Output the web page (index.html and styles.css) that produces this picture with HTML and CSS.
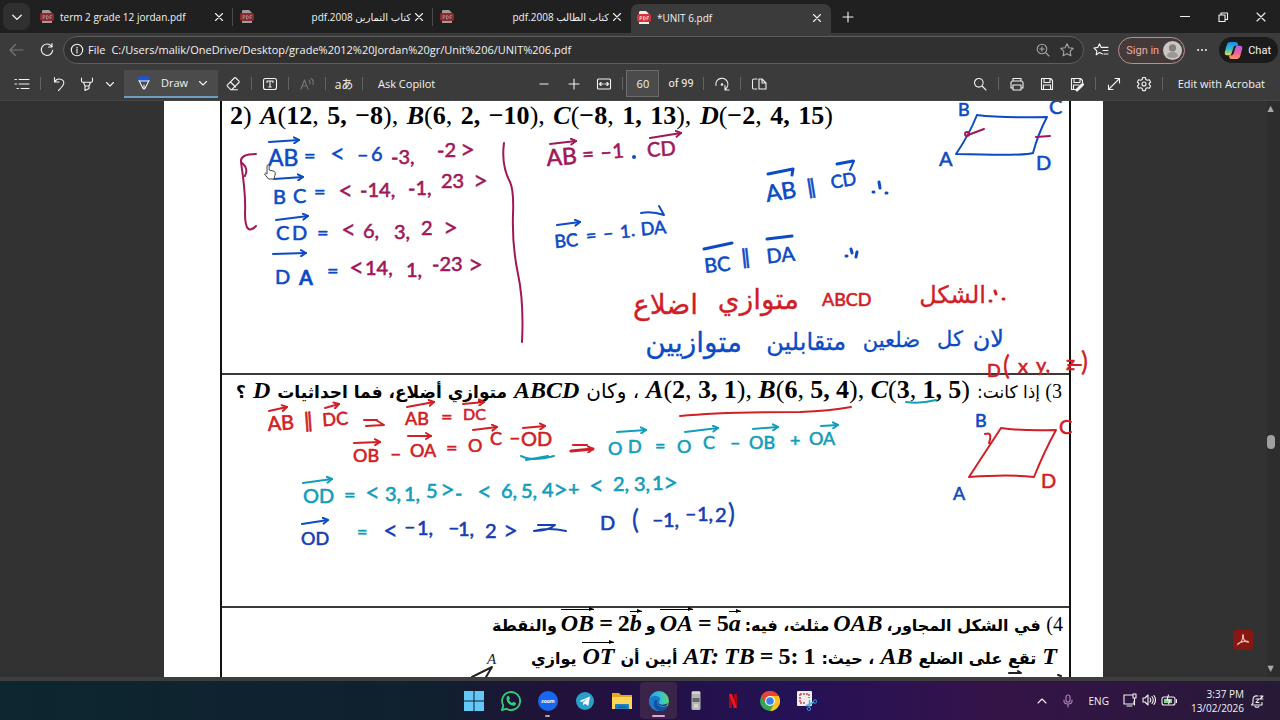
FILE: index.html
```html
<!DOCTYPE html>
<html lang="en">
<head>
<meta charset="utf-8">
<title>UNIT 6.pdf</title>
<link rel="stylesheet" href="styles.css">
</head>
<body>
<svg class="defs" aria-hidden="true">
  <symbol id="pdf" viewBox="0 0 14 14"><path d="M3 0h6l3 3v10H2V1z" fill="#f3eeee"/><rect x="0" y="3" width="14" height="8" rx="2" fill="#d5323b"/><path d="M3 9V5.500h1q1 0 1 1t-1 1H3M6.500 5.500V9q2 0 2-1.700t-2-1.800M10 9V5.500h2M10 7.200h1.600" fill="none" stroke="#fbdada" stroke-width=".8"/></symbol>
  <symbol id="x" viewBox="0 0 10 10"><path d="M1.500 1.500l7 7M8.500 1.500l-7 7"/></symbol>
  <symbol id="down" viewBox="0 0 10 10"><path d="M1.500 3.500L5 7l3.500-3.500"/></symbol>
  <symbol id="plus" viewBox="0 0 12 12"><path d="M6 1v10M1 6h10"/></symbol>
  <symbol id="star" viewBox="0 0 16 16"><path d="M8 1.800l1.900 4 4.300.6-3.100 3 .8 4.400L8 11.700l-3.900 2.100.8-4.400-3.100-3 4.300-.6z"/></symbol>
</svg>

<header class="tabs">
  <button class="tab-menu" aria-label="Tab actions"><svg class="i s12"><use href="#down"/></svg></button>
  <div class="tab"><svg class="fav"><use href="#pdf"/></svg><span class="title">term 2 grade 12 jordan.pdf</span><button aria-label="Close tab"><svg class="i s10"><use href="#x"/></svg></button></div>
  <div class="tab"><svg class="fav"><use href="#pdf"/></svg><span class="title" dir="rtl">كتاب التمارين 2008.pdf</span><button aria-label="Close tab"><svg class="i s10"><use href="#x"/></svg></button></div>
  <div class="tab last"><svg class="fav"><use href="#pdf"/></svg><span class="title" dir="rtl">كتاب الطالب 2008.pdf</span><button aria-label="Close tab"><svg class="i s10"><use href="#x"/></svg></button></div>
  <div class="tab active"><svg class="fav"><use href="#pdf"/></svg><span class="title">*UNIT 6.pdf</span><button aria-label="Close tab"><svg class="i s10"><use href="#x"/></svg></button></div>
  <button class="new-tab" aria-label="New tab"><svg class="i s12"><use href="#plus"/></svg></button>
  <div class="window-controls">
    <button aria-label="Minimize"><svg class="i s12" viewBox="0 0 12 12"><path d="M1.500 5.500h9"/></svg></button>
    <button aria-label="Restore"><svg class="i s12" viewBox="0 0 12 12"><path d="M2 4h6v6.500H2zM4 4V2h6.500v6.500H8"/></svg></button>
    <button aria-label="Close"><svg class="i s12" viewBox="0 0 12 12"><path d="M2 2l8 8M10 2l-8 8"/></svg></button>
  </div>
</header>

<nav class="address">
  <button class="nav-btn dim" aria-label="Back"><svg class="i s16" viewBox="0 0 16 16"><path d="M15 8H2M7.500 2.500L2 8l5.500 5.500"/></svg></button>
  <button class="nav-btn" aria-label="Refresh"><svg class="i s16" viewBox="0 0 16 16"><path d="M12.500 4.200A5.700 5.700 0 1 0 13.700 8M13 1.500v3.500H9.500"/></svg></button>
  <div class="pill">
    <svg class="i s14" viewBox="0 0 14 14"><circle cx="7" cy="7" r="5.700"/><path d="M7 6.300v3.700M7 4v.9"/></svg>
    <span class="scheme">File</span>
    <input aria-label="Address" value="C:/Users/malik/OneDrive/Desktop/grade%2012%20Jordan%20gr/Unit%206/UNIT%206.pdf">
    <button class="muted" aria-label="Zoom"><svg class="i s14" viewBox="0 0 14 14"><circle cx="6" cy="6" r="4.800"/><path d="M9.500 9.500L13 13M6 3.800v4.400M3.800 6h4.400"/></svg></button>
    <button class="muted" aria-label="Add to favorites"><svg class="i s16"><use href="#star"/></svg></button>
  </div>
  <button class="nav-btn fav-list" aria-label="Favorites"><svg class="i s16" viewBox="0 0 16 16"><path d="M9.500 12L6.500 10.500 3.200 12.800l.6-4L1 6l3.800-.6L6.500 1.800l1.700 3.600H15M10 8.500h5M11 12h4"/></svg></button>
  <button class="signin">Sign in<svg viewBox="0 0 20 20"><circle cx="10" cy="10" r="10" fill="#c9c7c6"/><circle cx="10" cy="7.300" r="3.800" fill="#85807e"/><path d="M4 16c0-6 12-6 12 0q-6 4-12 0" fill="#9d9997"/></svg></button>
  <button class="nav-btn more" aria-label="Settings and more"><svg viewBox="0 0 14 4"><g fill="#eee"><circle cx="2.500" cy="2" r="1.200"/><circle cx="7" cy="2" r="1.200"/><circle cx="11.500" cy="2" r="1.200"/></g></svg></button>
  <button class="chat"><svg viewBox="0 0 20 20"><defs><linearGradient id="c1" x2="0" y2="1"><stop offset="0" stop-color="#1889ec"/><stop offset=".55" stop-color="#35bfc7"/><stop offset="1" stop-color="#e8dc48"/></linearGradient><linearGradient id="c2" x2="0" y2="1"><stop offset="0" stop-color="#a963ed"/><stop offset=".5" stop-color="#ef5c9e"/><stop offset="1" stop-color="#ff9858"/></linearGradient></defs><path d="M6 1h6q2 0 2.500 2l.5 2h-3q-1.500 0-2 1.500L8 13q-.5 2-2 2H3q-3 0-2-4L3 4Q3.800 1 6 1z" fill="url(#c1)"/><path d="M14 19H8q-2 0-2.500-2L5 15h3q1.500 0 2-1.500L12 7q.5-2 2-2h3q3 0 2 4l-2 7q-.8 3-3 3z" fill="url(#c2)"/></svg>Chat</button>
</nav>

<div class="toolbar">
  <div class="group">
    <button class="tool" aria-label="Contents"><svg class="i s16" viewBox="0 0 16 16"><path d="M5 3.500h10M5 8h10M7 12.500h8M1 3.500h1.500M1 8h1.500M3 12.500h1.500"/></svg></button><i class="sep"></i>
    <button class="tool" aria-label="Undo"><svg class="i s16" viewBox="0 0 16 16"><path d="M3.500 1.500V6H8M3.500 6c3-5 10-3 9.200 1.500C12.500 9.500 10 12 7.500 14.500"/></svg></button>
    <button class="tool hl" aria-label="Highlight"><svg class="i s16" viewBox="0 0 16 16"><path d="M2.500 2v3q0 1.200 1.200 1.200h8.600q1.200 0 1.200-1.200V2M4.500 6.200L6 10h4l1.500-3.800M6 10v4.500l4-2V10"/></svg></button>
    <button class="chev" aria-label="Highlight options"><svg class="i s10"><use href="#down"/></svg></button>
    <button class="draw"><svg class="i s16" viewBox="0 0 16 16"><path d="M2 2h12l-1.500 4h-9z" fill="#1d55d8" stroke="#1d55d8"/><path d="M3 5.500L7 13.500q1 1.200 2 0l4-8M3.500 6h9M8 10v3"/></svg>Draw<svg class="i s10 end"><use href="#down"/></svg></button>
    <button class="tool" aria-label="Erase"><svg class="i s16" viewBox="0 0 16 16"><path d="M9.300 2L2.500 8.800q-.8.800 0 1.500l3 3q.7.700 1.500 0L14 6.500q.6-.7 0-1.400L10.800 2q-.8-.7-1.500 0zM5.500 6l5 5M7 13.800h5.500"/></svg></button><i class="sep"></i>
    <button class="tool" aria-label="Add text"><svg class="i s16" viewBox="0 0 16 16"><rect x="1.500" y="2.500" width="13" height="11" rx="2"/><path d="M5 6.500V5h6v1.500M8 5v6M6.800 11h2.400"/></svg></button><i class="sep"></i>
    <button class="tool faint" aria-label="Read aloud"><svg class="i s16" viewBox="0 0 16 16"><path d="M2 13L5.500 4 9 13M3.200 10h4.600M10 4q1.500 1.500 1 4M12.500 2.500q2.500 2.500 1.500 6"/></svg></button><i class="sep"></i>
    <button class="tool ja" aria-label="Translate">aあ</button><i class="sep"></i>
    <button class="text-btn ask">Ask Copilot</button>
  </div>
  <div class="group middle">
    <button class="tool" aria-label="Zoom out"><svg class="i s12" viewBox="0 0 12 12"><path d="M2 6h8"/></svg></button>
    <button class="tool" aria-label="Zoom in"><svg class="i s12"><use href="#plus"/></svg></button>
    <button class="tool" aria-label="Fit to width"><svg class="i s16" viewBox="0 0 16 16"><rect x="1.500" y="3" width="13" height="10" rx="1"/><path d="M3.800 8h3.400M8.800 8h3.400M5 6.500L3.500 8 5 9.500M11 6.500L12.500 8 11 9.500"/></svg></button><i class="sep"></i>
    <input aria-label="Page number" value="60"><span class="of">of 99</span><i class="sep"></i>
    <button class="tool" aria-label="Rotate"><svg class="i s16" viewBox="0 0 16 16"><path d="M2 9.500a6 6 0 1 1 9.500 3.500M11 9.500v4.500h4"/><circle cx="8" cy="8.500" r=".8"/></svg></button><i class="sep"></i>
    <button class="tool" aria-label="Page view"><svg class="i s16" viewBox="0 0 16 16"><path d="M8 3h3l4 4v6H8zM11 3v4h4"/><path d="M6 3H3q-1.500 0-1.500 1.500v7Q1.500 13 3 13h3" stroke-dasharray="2 1"/></svg></button>
  </div>
  <div class="group right">
    <button class="tool" aria-label="Find"><svg class="i s16" viewBox="0 0 16 16"><circle cx="6.800" cy="6.800" r="4.300"/><path d="M10 10l4 4"/></svg></button><i class="sep"></i>
    <button class="tool" aria-label="Print"><svg class="i s16" viewBox="0 0 16 16"><path d="M4 5V2.500h8V5M4 12H2V7q0-2 2-2h8q2 0 2 2v5h-2M4 9h8v5H4z"/></svg></button>
    <button class="tool" aria-label="Save"><svg class="i s16" viewBox="0 0 16 16"><path d="M2.500 2.500h9l2 2v9h-11zM5 2.500v4h6v-4M4.500 13.500V9h7v4.500"/></svg></button>
    <button class="tool" aria-label="Save as"><svg class="i s16" viewBox="0 0 16 16"><path d="M7 13.500H2.500v-11h9l2 2V7M5 2.500v4h6v-4M4.500 13.500V9H10"/><path d="M8 14l5.500-5.500" stroke-width="3"/></svg></button><i class="sep"></i>
    <button class="tool" aria-label="Full screen"><svg class="i s16" viewBox="0 0 16 16"><path d="M2.500 13.500l11-11M9 2.500h4.500V7M2.500 9v4.500H7"/></svg></button>
    <button class="tool" aria-label="Settings"><svg class="i s16" viewBox="0 0 16 16"><path d="M6.700 1.500h2.600l.5 2 1.500.8 2-.6 1.300 2.300L13.200 7.500v1.200l1.400 1.400-1.300 2.200-2-.5-1.500.8-.5 2H6.700l-.5-2-1.500-.8-2 .5-1.300-2.200 1.400-1.400V7.500L1.400 6l1.300-2.300 2 .6 1.500-.8z"/><circle cx="8" cy="8" r="2"/></svg></button><i class="sep"></i>
    <button class="text-btn edit">Edit with Acrobat</button>
  </div>
</div>

<main class="viewer">
  <div class="canvas">
    <article class="page">
      <div class="frame">
        <section class="q1">
          <p class="line first"><span><b>2</b>)</span><span><em>A</em>(<b>12</b>,</span><b>5,</b><span><b>−8</b>),</span><span><em>B</em>(<b>6</b>,</span><b>2,</b><span><b>−10</b>),</span><span><em>C</em>(<b>−8</b>,</span><b>1,</b><span><b>13</b>),</span><span><em>D</em>(<b>−2</b>,</span><b>4,</b><span><b>15</b>)</span></p>
        </section>
        <section class="q2" dir="rtl">
          <p class="line"><span class="ar thin"><span class="num">3)</span> إذا كانت:</span><span class="eq wide" dir="ltr"><span><em>A</em>(<b>2</b>,</span><b>3,</b><span><b>1</b>),</span><span><em>B</em>(<b>6</b>,</span><b>5,</b><span><b>4</b>),</span><span><em>C</em>(<b>3</b>,</span><b>1,</b><span><b>5</b>)</span></span><span class="ar thin big">، وكان</span><em>ABCD</em><span class="ar mid">متوازي أضلاع، فما احداثيات</span><em>D</em><span class="ar mid">؟</span></p>
        </section>
        <section class="q3" dir="rtl">
          <p class="line a"><span class="ar"><span class="num">4)</span> في الشكل المجاور،</span><em>OAB</em><span class="ar">مثلث، فيه:</span><span class="eq" dir="ltr"><em class="vec">OA</em><b>=</b><span><b>5</b><em class="vec">a</em></span></span><span class="ar">و</span><span class="eq" dir="ltr"><em class="vec">OB</em><b>=</b><span><b>2</b><em class="vec">b</em></span></span><span class="ar">والنقطة</span></p>
          <p class="line b"><em>T</em><span class="ar">تقع على الضلع</span><em>AB</em><span class="ar">، حيث:</span><span class="eq" dir="ltr"><em>AT:</em><em>TB</em><b>=</b><b>5:</b><b>1</b></span><span class="ar">أبين أن</span><em class="vec">OT</em><span class="ar">يوازي</span></p>
        </section>
      </div>
      <svg class="ink" viewBox="164 100 939 577">
        <defs>
          <marker id="h" viewBox="0 0 8 8" refX="6" refY="4" markerWidth="8" markerHeight="8" markerUnits="userSpaceOnUse" orient="auto"><path d="M1 1l5 3-5 3" fill="none" stroke="context-stroke" stroke-width="2"/></marker>
        </defs>
        <g class="blue">
          <g class="arrows"><path d="M269 142L299 140"/><path d="M274 179L303 177"/><path d="M276 220L308 216"/><path d="M273 254L306 253"/><path d="M557 225L580 222"/><path d="M302 524L328 520"/></g>
          <text><tspan class="l" x="268" y="166">AB</tspan><tspan x="304" y="163">=</tspan><tspan class="o" x="330" y="163">&lt;</tspan><tspan x="357" y="161">–</tspan><tspan x="371" y="161">6</tspan></text>
          <text><tspan x="273" y="204">B</tspan><tspan x="293" y="203">C</tspan><tspan x="314" y="199">=</tspan></text>
          <text><tspan x="276" y="240">C</tspan><tspan x="292" y="240">D</tspan><tspan x="317" y="240">=</tspan></text>
          <text><tspan x="275" y="284">D</tspan><tspan class="b" x="299" y="285">A</tspan><tspan x="327" y="278">=</tspan></text>
          <text class="sm" transform="rotate(-5 555 248)"><tspan x="555" y="248">BC</tspan><tspan x="587" y="245">=</tspan><tspan x="604" y="244">–</tspan><tspan x="621" y="244">1</tspan><tspan x="632" y="243">.</tspan><tspan x="642" y="243">DA</tspan></text>
          <path d="M641 213Q652 211 664 215M659 206L664 215"/>
          <path class="thick" d="M768 174L793 169M793 169L792 175M837 164L853 161M704 249L732 243M767 239L792 236"/>
          <path d="M854 161L850 170"/>
          <text transform="rotate(-9 767 202)"><tspan class="l" x="767" y="202">AB</tspan><tspan x="808" y="201">∥</tspan><tspan class="s" x="833" y="199">CD</tspan></text>
          <text transform="rotate(-6 705 273)"><tspan x="705" y="273">BC</tspan><tspan x="742" y="268">∥</tspan><tspan x="768" y="270">DA</tspan></text>
          <path class="thick" d="M873 192h1M879 182l1 6M886 193h1M846 256h1M851 249l1 4M856 257l1-5"/>
          <text class="hand"><tspan class="h24" x="1004" y="347">لان</tspan><tspan x="963" y="346">كل</tspan><tspan x="920" y="347">ضلعين</tspan><tspan class="h24" x="846" y="350">متقابلين</tspan><tspan class="h28" x="742" y="352">متوازيين</tspan></text>
          <path d="M977 115Q1000 118 1047 117Q1038 134 1033 153Q1027 156 956 154Q969 135 977 115"/>
          <text><tspan class="s" x="958" y="116">B</tspan><tspan x="1049" y="114">C</tspan><tspan x="939" y="166">A</tspan><tspan x="1036" y="170">D</tspan></text>
        </g>
        <g class="wine">
          <path d="M256 154Q240 154 241 162Q249 168 245 176M241 162Q246 195 245 213Q245 237 256 226M504 143Q501 165 510 182Q514 190 513 215Q512 245 518 274Q524 302 522 342"/>
          <text><tspan x="391" y="164">-3,</tspan><tspan x="437" y="157">-2</tspan><tspan class="o" x="460" y="159">&gt;</tspan></text>
          <text><tspan class="o" x="338" y="200">&lt;</tspan><tspan x="360" y="197">-14,</tspan><tspan x="408" y="195">-1,</tspan><tspan x="441" y="188">23</tspan><tspan class="o" x="473" y="190">&gt;</tspan></text>
          <text><tspan class="o" x="341" y="239">&lt;</tspan><tspan x="363" y="238">6,</tspan><tspan x="394" y="239">3,</tspan><tspan x="421" y="235">2</tspan><tspan class="o" x="443" y="237">&gt;</tspan></text>
          <text><tspan class="o" x="349" y="277">&lt;</tspan><tspan x="365" y="275">14,</tspan><tspan x="406" y="277">1,</tspan><tspan x="432" y="271">-23</tspan><tspan class="o" x="468" y="274">&gt;</tspan></text>
          <g class="arrows"><path d="M550 144L576 141"/><path d="M650 138L681 133"/></g>
          <text transform="rotate(-4 546 166)"><tspan class="l" x="547" y="166">AB</tspan><tspan x="583" y="164">=</tspan><tspan x="601" y="163">–</tspan><tspan x="613" y="163">1</tspan><tspan x="648" y="164">CD</tspan></text>
          <circle cx="967" cy="134" r="2"/><path d="M968 135L984 129M1036 137L1050 136"/>
        </g>
        <circle cx="634" cy="157" r="1" class="blue"/>
        <g class="red">
          <text class="hand"><tspan class="h24" x="986" y="303">الشكل</tspan><tspan class="h28" x="799" y="309">متوازي</tspan><tspan class="h28" x="698" y="314">اضلاع</tspan></text>
          <path class="thick" d="M990 301h1M995 291l1 3M1003 299h1"/>
          <text class="sm" x="822" y="306">ABCD</text>
          <text><tspan class="s" x="987" y="377">D</tspan><tspan class="o" x="1003" y="375">(</tspan><tspan x="1018" y="373">x</tspan><tspan x="1036" y="372">y,</tspan><tspan x="1066" y="370">z</tspan><tspan class="o" x="1081" y="371">)</tspan></text>
          <path d="M1068 365h13M680 416Q720 412 800 412Q830 411 851 407"/>
          <g class="arrows"><path d="M269 411L287 407"/><path d="M325 408L339 404"/><path d="M407 407L434 402"/><path d="M463 404L484 402"/><path d="M354 443L380 442"/><path d="M408 436L431 436"/><path d="M473 430L497 427"/><path d="M523 428L545 426"/><path class="thick" d="M571 451L593 449"/></g>
          <path d="M364 420h13M366 426L384 425L376 420M573 445h14"/>
          <text transform="rotate(-4 268 431)"><tspan x="268" y="431">AB</tspan><tspan x="304" y="430">∥</tspan><tspan class="s" x="323" y="430">DC</tspan></text>
          <text><tspan class="s" x="405" y="425">AB</tspan><tspan x="441" y="424">=</tspan><tspan class="t" x="463" y="420">DC</tspan></text>
          <text><tspan class="s" x="353" y="462">OB</tspan><tspan x="390" y="460">–</tspan><tspan class="s" x="410" y="457">OA</tspan><tspan x="446" y="455">=</tspan><tspan class="s" x="468" y="452">O</tspan><tspan class="s" x="490" y="445">C</tspan><tspan x="509" y="444">–</tspan><tspan x="521" y="446">OD</tspan></text>
          <path d="M1001 428Q1020 431 1056 430Q1044 452 1034 477Q1010 474 969 477Q984 454 1001 428M985 434q8-3 4 9"/>
          <text><tspan x="1059" y="434">C</tspan><tspan x="1041" y="488">D</tspan></text>
        </g>
        <g class="blue"><text class="sm"><tspan x="975" y="427">B</tspan><tspan x="953" y="500">A</tspan></text></g>
        <g class="teal">
          <path d="M906 402Q920 404 936 400M521 456Q532 462 554 456M526 460L548 456"/>
          <g class="arrows"><path d="M617 432L646 430"/><path d="M685 432L718 428"/><path d="M753 429L778 427"/><path d="M821 426L838 425"/><path d="M303 483L332 479"/></g>
          <text class="sm"><tspan x="608" y="455">O</tspan><tspan x="628" y="453">D</tspan><tspan x="655" y="452">=</tspan><tspan x="677" y="453">O</tspan><tspan x="703" y="449">C</tspan><tspan x="730" y="449">–</tspan><tspan x="749" y="449">OB</tspan><tspan x="790" y="447">+</tspan><tspan x="809" y="445">OA</tspan></text>
          <text><tspan x="303" y="503">OD</tspan><tspan x="344" y="502">=</tspan><tspan class="o" x="365" y="502">&lt;</tspan><tspan x="385" y="501">3,</tspan><tspan x="404" y="501">1,</tspan><tspan x="426" y="498">5</tspan><tspan class="o" x="440" y="499">&gt;</tspan><tspan x="455" y="500">-</tspan><tspan class="o" x="477" y="501">&lt;</tspan><tspan x="501" y="498">6,</tspan><tspan x="521" y="498">5,</tspan><tspan x="542" y="497">4</tspan><tspan class="o" x="553" y="499">&gt;</tspan><tspan x="568" y="496">+</tspan><tspan class="o" x="589" y="495">&lt;</tspan><tspan x="613" y="491">2,</tspan><tspan x="634" y="491">3,</tspan><tspan x="652" y="490">1</tspan><tspan class="o" x="663" y="492">&gt;</tspan></text>
          <text class="sm" x="357" y="538">=</text>
        </g>
        <g class="navy">
          <text><tspan x="301" y="545" class="s">OD</tspan><tspan class="o" x="383" y="540">&lt;</tspan><tspan x="404" y="533">–</tspan><tspan x="417" y="535">1,</tspan><tspan x="448" y="534">–</tspan><tspan x="458" y="536">1,</tspan><tspan x="485" y="538">2</tspan><tspan class="o" x="503" y="540">&gt;</tspan><tspan x="600" y="530">D</tspan><tspan class="o" x="632" y="529">(</tspan><tspan x="652" y="526">–</tspan><tspan x="663" y="527">1,</tspan><tspan x="685" y="520">–</tspan><tspan x="697" y="521">1,</tspan><tspan x="715" y="522">2</tspan><tspan class="o" x="728" y="523">)</tspan></text>
          <path d="M538 525L555 525Q548 531 534 531Q548 527 566 531"/>
        </g>
        <g class="print">
          <text x="487" y="664">A</text>
          <path d="M472 677L492 667L486 677M1009 673h12l-3-2M1058 675l3 1"/>
        </g>
      </svg>
      <svg class="cursor" viewBox="0 0 14 18"><path d="M4 11V2.500Q5.200 1 6.200 2.500V7l5 1.300Q12.500 9 12.300 11L11 16H5.500L1.500 11Q2 9.300 4 11z" fill="#fff" stroke="#444"/></svg>
    </article>
    <button class="acrobat" aria-label="Open in Acrobat"><svg viewBox="0 0 20 20"><path d="M4 15c5-2 6-7 5.500-10 0-1.500 1.500-1 1 1C9.500 9 14 13 16 12.500c1-.7-1.500-1.800-5-1S4.500 13.500 4 15z" fill="none" stroke="#e9b5b0" stroke-width="1.200"/></svg></button>
  </div>
  <div class="scrollbar"><span>▲</span><i></i><span>▼</span></div>
</main>

<footer class="taskbar">
  <div class="apps">
    <button aria-label="Start"><svg viewBox="0 0 20 20" fill="#63c8f5"><path d="M0 0h9.500v9.500H0zM10.500 0H20v9.500h-9.500zM0 10.500h9.500V20H0zM10.500 10.500H20V20h-9.500z"/></svg></button>
    <button aria-label="WhatsApp"><svg viewBox="0 0 20 20"><path d="M1 19l1.300-4.500A9 9 0 1 1 5.600 17.800z" fill="none" stroke="#35ce78" stroke-width="1.800"/><path d="M6.500 5l1.300-.2L9 7.600 8 9q1 2 3 3l1.300-1.200 2.700 1.300q0 2.500-2.700 2.600Q6 13.500 5.500 8q0-2 1-3z" fill="#35ce78"/></svg></button>
    <button class="open" aria-label="Zoom"><svg viewBox="0 0 20 20"><circle cx="10" cy="10" r="10" fill="#1967ee"/><text x="10" y="12" class="zoom">zoom</text></svg></button>
    <button aria-label="Telegram"><svg viewBox="0 0 20 20"><circle cx="10" cy="10" r="9" fill="#2b9fcb"/><path d="M4.500 10L15 5.500l-1.700 9.500-3.200-2.300-1.800 1.600-.3-2.900L13 7.600 6.900 11z" fill="#fff"/></svg></button>
    <button aria-label="File Explorer"><svg viewBox="0 0 20 20"><path d="M0 2h7l2 2h11v14H0z" fill="#e5a822"/><path d="M0 6h20v12H0z" fill="#ffd659"/><path d="M3 18v-4q0-1 1-1h12q1 0 1 1v4z" fill="#1c7fc1"/><path d="M6 16h8" stroke="#11568c"/></svg></button>
    <button class="current" aria-label="Microsoft Edge"><svg viewBox="0 0 20 20"><defs><linearGradient id="e"><stop offset="0" stop-color="#299ee2"/><stop offset=".6" stop-color="#35c4cf"/><stop offset="1" stop-color="#60d66a"/></linearGradient></defs><circle cx="10" cy="10" r="10" fill="url(#e)"/><path d="M0 10Q1 5 6 5q6 0 5 5-1.500 0-1.500 2 0 3 5 3.500 2.500 0 4-1Q16 20 10 20 1 19.500 0 10z" fill="#187bcd"/><path d="M6 9q-4 7 4 11h3q4-1 5.500-5.500Q13 18 9.500 14.500 7 12 8.500 9z" fill="#15509f"/><path d="M10.500 9.500q-2 3 1.500 4 4 1 7-1.500-1 3-4.500 3-5.500-.5-5-3.500z" fill="#291b57"/></svg></button>
    <button aria-label="Device"><svg viewBox="0 0 20 20"><rect x="5.500" width="9" height="19" rx="1.500" fill="#b5b4b5"/><path d="M6.500 7h7v4h-7z" fill="#67636d"/><path d="M6 2h8M8 14h4M8 16h4" stroke="#eee"/></svg></button>
    <button aria-label="Netflix"><svg viewBox="0 0 20 20"><path d="M6 3h3v14H6zM11 3h3v14h-3z" fill="#a40a16"/><path d="M6 3h3l5 14h-3z" fill="#ef1723"/></svg></button>
    <button aria-label="Chrome"><svg viewBox="0 0 20 20"><circle cx="10" cy="10" r="10" fill="#31a853"/><path d="M1.300 5A10 10 0 0 1 18.700 5H10l-4.300 7.500z" fill="#e84435"/><path d="M18.700 5A10 10 0 0 1 10 20l4.300-7.500L10 5z" fill="#fbc11c"/><circle cx="10" cy="10" r="5" fill="#fff"/><circle cx="10" cy="10" r="3.800" fill="#3c80ed"/></svg></button>
    <button aria-label="Snipping Tool"><svg viewBox="0 0 20 20"><rect width="15" height="15" rx="1" fill="#eee"/><path d="M3 3h9M3 3v9h5M12 3v4" fill="none" stroke="#d44447" stroke-width="1.500" stroke-dasharray="2 1"/><path d="M17 11L9 15M12.500 9v7" stroke="#4cb2ea" stroke-width="1.500"/><circle cx="18" cy="10.500" r="1.700" fill="none" stroke="#3f95dd"/><circle cx="12" cy="17.800" r="1.700" fill="none" stroke="#3f95dd"/></svg></button>
  </div>
  <div class="tray">
    <svg class="i s10" viewBox="0 0 10 10"><path d="M1 7l4-4 4 4"/></svg>
    <svg class="i s14 mic" viewBox="0 0 14 14"><rect x="5" y="1" width="4" height="7" rx="2"/><path d="M3 6v1q0 3 4 3t4-3V6M7 10v3"/></svg>
    <span>ENG</span>
    <div class="status">
      <svg class="i s14" viewBox="0 0 14 14"><path d="M9 2H1v9h10V8M4 13h5M10 1h3v4h-3zM11.500 5v7"/></svg>
      <svg class="i s14" viewBox="0 0 14 14"><path d="M1 5h2l3-3v10L3 9H1zM8 5q1.500 2 0 4M10 3.500q2.500 3.500 0 7M12 2.500q3 4.500 0 9"/></svg>
      <svg class="i s16" viewBox="0 0 16 16"><rect x="1" y="4" width="13" height="8" rx="2"/><rect x="3" y="6" width="8" height="4" fill="#86d48a" stroke="none"/><path d="M15.500 6.500v3M7.500 2L6 7h3L7.500 11"/></svg>
    </div>
    <div class="clock"><span>3:37 PM</span><span>13/02/2026</span></div>
    <svg class="i s14" viewBox="0 0 14 14"><path d="M8 2Q3 1 3 6v3l-1.500 2H12V8.500M5 12.500q2 1.500 4 0M6 5h3L6 8.500h3M10 2h3l-3 3h3"/></svg>
  </div>
</footer>
</body>
</html>
```
FILE: styles.css
```css
* { box-sizing: border-box; }
body {
  margin: 0;
  height: 100vh;
  display: flex;
  flex-direction: column;
  overflow: hidden;
  background: #3b3b3b;
  color: #f2f2f2;
  font: 11px/16px "Open Sans", "Noto Sans", "DejaVu Sans", sans-serif;
}
button, input { font: inherit; color: inherit; background: none; border: 0; padding: 0; margin: 0; }
button { display: inline-flex; align-items: center; justify-content: center; flex: none; }
p { margin: 0; }
.defs { position: absolute; width: 0; height: 0; }
.i { fill: none; stroke: currentColor; stroke-width: 1.1; flex: none; stroke-linecap: round; stroke-linejoin: round; }
.s10 { width: 10px; height: 10px; }
.s12 { width: 12px; height: 12px; }
.s14 { width: 14px; height: 14px; }
.s16 { width: 16px; height: 16px; }

.tabs { display: flex; align-items: center; height: 33px; background: #202020; flex: none; font-size: 10px; }
.tab-menu { width: 27px; height: 27px; margin: 0 3px; border-radius: 8px; background: #303030; }
.tab { display: flex; align-items: center; flex: 0 1 200px; min-width: 0; height: 18px; padding: 0 5px 0 7px; border-right: 1px solid #4b4b4b; }
.tab.last { border-color: transparent; flex-basis: 198px; }
.tab.active { height: 29px; align-self: flex-end; background: #3b3b3b; border: 0; border-radius: 7px 7px 0 0; padding: 0 6px 1px 6px; }
.fav { width: 14px; height: 14px; flex: none; opacity: .6; }
.active .fav { opacity: 1; }
.title { flex: 1; margin: 0 0 0 6px; white-space: nowrap; overflow: hidden; }
.tab button { width: 16px; height: 16px; }
.new-tab { width: 34px; height: 28px; }
.window-controls { display: flex; margin-left: auto; }
.window-controls button { width: 38px; height: 32px; }

.address { display: flex; align-items: center; height: 34px; flex: none; padding-right: 2px; }
.nav-btn { width: 31px; height: 28px; }
.dim { color: #777; }
.pill { flex: 1; display: flex; align-items: center; height: 28px; margin-left: 1px; padding: 0 4px 0 6px; background: #303030; border: 1px solid #5d5d5d; border-radius: 14px; min-width: 0; }
.scheme { margin: 0 6px 0 4px; }
.pill input { flex: 1; min-width: 0; outline: 0; }
.pill button { width: 24px; height: 24px; }
.muted { color: #a5a5a5; }
.fav-list { width: 34px; }
.signin { height: 27px; padding: 0 2px 0 7px; gap: 4px; border: 1px solid #b9918c; border-radius: 14px; background: #443a39; color: #f0aaa4; font: 11px Roboto, sans-serif; }
.signin svg, .chat svg { width: 19px; height: 19px; }
.more { width: 34px; }
.more svg { width: 12px; height: 4px; }
.chat { height: 26px; padding: 0 7px 0 5px; gap: 5px; border-radius: 13px; background: #1b1b1b; font: 11px Roboto, sans-serif; }

.toolbar { display: grid; grid-template-columns: minmax(0, 1fr) auto minmax(0, 1fr); align-items: center; height: 34px; flex: none; padding: 0 6px 0 7px; border-bottom: 1px solid #464646; }
.group { display: flex; align-items: center; white-space: nowrap; }
.middle { margin-left: 22px; }
.right { justify-content: flex-end; }
.tool { width: 30px; height: 28px; }
.hl { margin-left: -2px; }
.chev { width: 16px; height: 28px; }
.faint { color: #777; }
.sep { width: 1px; height: 13px; margin: 0 3px; background: #646464; flex: none; }
.draw { width: 94px; height: 28px; margin-left: 6px; padding: 0 10px 0 12px; gap: 9px; background: #4b4b4b; border-bottom: 2px solid #6b9ec5; }
.draw .end { margin-left: auto; }
.ja { font: 12px "Open Sans", "Noto Sans CJK JP", sans-serif; }
.text-btn { height: 28px; padding: 0 9px 0 12px; }
.middle input { width: 33px; height: 27px; text-align: center; background: #4b4b4b; border: 1px solid #6c6c6c; }
.of { padding: 0 6px 0 9px; font-family: Roboto, sans-serif; }

.viewer { flex: 1; display: flex; min-height: 0; background: #323232; border-bottom: 4px solid #3e3e3e; }
.canvas { position: relative; flex: 1; display: flex; justify-content: center; overflow: hidden; }
.page { position: relative; width: 939px; background: #fff; color: #000; padding: 0 32px 0 56px; }
.frame { height: 100%; border: solid #111; border-width: 0 2px 0 2px; }
.q1 { height: 272px; padding: 0 8px; }
.q2 { height: 233px; border-top: 2px solid #3a3a3a; padding: 0 7px 0 14px; }
.q3 { border-top: 2px solid #3a3a3a; padding: 0 6px; }
.line { display: flex; justify-content: space-between; align-items: baseline; white-space: nowrap; font: 24px/30px "Liberation Serif", serif; }
.line em { font-weight: bold; }
.first { max-width: 603px; font-size: 26px; }
.line.a { padding-left: 264px; }
.line.b { padding: 0 6px 0 303px; }
.eq { display: inline-flex; align-items: baseline; gap: 5px; }
.eq.wide { width: 324px; justify-content: space-between; gap: 0; font-size: 26px; }
.ar { font: bold 16px/30px "DejaVu Sans", sans-serif; }
.ar.thin { font-size: 17px; font-weight: normal; }
.ar.mid { font-size: 17px; }
.ar.big { font-size: 20px; }
.num { font: 20px "Liberation Serif", serif; }
.vec { position: relative; }
.vec::before { content: ""; position: absolute; left: 0; right: 0; top: 1px; border-top: 1px solid #000; }
.vec::after { content: ""; position: absolute; right: 0; top: -1px; border: solid transparent; border-width: 2px 0 2px 5px; border-left-color: #000; }

.ink, .cursor { position: absolute; pointer-events: none; }
.ink { left: 0; top: -1px; width: 939px; height: 577px; fill: none; stroke-width: 2; stroke-linecap: round; stroke-linejoin: round; }
.ink text { stroke-width: 0.6; font: 20px Lato, "DejaVu Sans", sans-serif; }
.ink text.sm, .ink tspan.s { font-size: 18px; }
.ink tspan.t { font-size: 16px; }
.ink tspan.l { font-size: 23px; }
.ink tspan.o { font-size: 26px; stroke-width: 0.3; }
.ink tspan.b { font-weight: bold; }
.ink text.hand { direction: rtl; font: 21px "DejaVu Sans", sans-serif; stroke-width: 0.3; }
.ink .h24 { font-size: 24px; }
.ink .h28 { font-size: 28px; }
.ink .thick { stroke-width: 3; }
.arrows path { marker-end: url(#h); }
.blue { stroke: #0d4bc4; } .blue text { fill: #0d4bc4; }
.wine { stroke: #a01858; } .wine text { fill: #a01858; }
.red { stroke: #d02025; } .red text { fill: #d02025; }
.teal { stroke: #129dba; } .teal text { fill: #129dba; }
.navy { stroke: #1440b4; } .navy text { fill: #1440b4; }
.print { stroke: #222; } .ink .print text { stroke: none; fill: #222; font: italic 15px "Liberation Serif", serif; }
.cursor { left: 99px; top: 62px; width: 14px; height: 18px; }
.acrobat { position: absolute; right: 14px; bottom: 27px; width: 20px; height: 20px; border-radius: 3px; background: #871713; }
.acrobat svg { width: 18px; height: 18px; }
.scrollbar { width: 13px; display: flex; flex-direction: column; align-items: center; background: #2d2d2d; color: #aaa; font: 8px/16px "DejaVu Sans", sans-serif; }
.scrollbar i { width: 8px; height: 14px; border-radius: 4px; background: #a0a0a0; margin: 318px 6px auto 0; }
.scrollbar span { margin-right: 6px; }

.taskbar { display: grid; grid-template-columns: 1fr auto 1fr; align-items: center; height: 39px; flex: none; background: linear-gradient(90deg, #0c2730, #10202f 34%, #211239 43%, #251157 62%, #351348 78%, #261a36); }
.apps { grid-column: 2; display: flex; }
.apps button { position: relative; width: 37px; height: 37px; }
.apps svg { width: 20px; height: 20px; }
.apps .current { background: #3a2449; border-radius: 4px; }
.open::after, .current::after { content: ""; position: absolute; bottom: 2px; width: 5px; height: 2px; border-radius: 1px; background: #aaa; }
.current::after { width: 13px; background: #e3a4d8; }
.zoom { font: bold 5px "Open Sans", sans-serif; fill: #fff; text-anchor: middle; }
.tray { display: flex; align-items: center; justify-content: flex-end; gap: 14px; padding-right: 16px; font: 10px/14px "Open Sans", sans-serif; }
.mic { color: #b184b6; }
.status { display: flex; gap: 5px; }
.clock { display: flex; flex-direction: column; text-align: right; margin-right: -8px; }
```
